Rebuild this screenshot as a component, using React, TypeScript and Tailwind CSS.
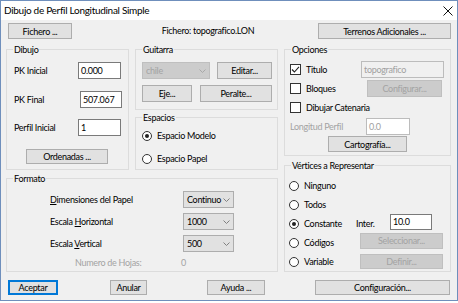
import React from 'react';

const Btn: React.FC<{
  className?: string;
  disabled?: boolean;
  primary?: boolean;
  children: React.ReactNode;
}> = ({ className = '', disabled, primary, children }) => (
  <div
    className={`flex shrink-0 items-center justify-center border leading-none ${
      disabled
        ? 'border-[#bfbfbf] bg-[#cccccc] text-[#a3a3a3]'
        : primary
          ? 'border-[#0078d7] bg-[#e1e1e1] text-black shadow-[inset_0_0_0_1px_#0078d7]'
          : 'border-[#adadad] bg-[#e1e1e1] text-black'
    } ${className}`}
  >
    {children}
  </div>
);

const Chevron: React.FC<{ color?: string }> = ({ color = '#606060' }) => (
  <svg width="7" height="4" viewBox="0 0 7 4" className="shrink-0">
    <polyline points="0.5,0.5 3.5,3.5 6.5,0.5" fill="none" stroke={color} strokeWidth="1" />
  </svg>
);

const Combo: React.FC<{ value: string; className?: string; disabled?: boolean }> = ({
  value,
  className = '',
  disabled,
}) => (
  <div
    className={`flex shrink-0 items-center justify-between border pl-[3px] pr-[3px] ${
      disabled ? 'border-[#bfbfbf] bg-[#cccccc] text-[#a3a3a3]' : 'border-[#adadad] bg-[#e1e1e1] text-black'
    } ${className}`}
  >
    <span>{value}</span>
    <Chevron color={disabled ? '#a8a8a8' : '#808080'} />
  </div>
);

const Field: React.FC<{ value: string; className?: string; disabled?: boolean }> = ({
  value,
  className = '',
  disabled,
}) => (
  <div
    className={`flex shrink-0 items-center border px-[2px] ${
      disabled ? 'border-[#bcbcbc] bg-[#f0f0f0] text-[#a0a0a0]' : 'border-[#7a7a7a] bg-white text-black'
    } ${className}`}
  >
    {value}
  </div>
);

const Check: React.FC<{ checked?: boolean; label: string; className?: string }> = ({
  checked,
  label,
  className = '',
}) => (
  <div className={`flex shrink-0 items-center ${className}`}>
    <div className="flex h-[11px] w-[11px] shrink-0 items-center justify-center border border-[#333333] bg-white">
      {checked && (
        <svg width="9" height="9" viewBox="0 0 9 9">
          <polyline points="1,4.5 3.4,7 8,1.8" fill="none" stroke="#222" strokeWidth="1.1" />
        </svg>
      )}
    </div>
    <span className="ml-[5px]">{label}</span>
  </div>
);

const Radio: React.FC<{ checked?: boolean; label: string; className?: string }> = ({
  checked,
  label,
  className = '',
}) => (
  <div className={`flex shrink-0 items-center ${className}`}>
    <div className="flex h-[10px] w-[10px] shrink-0 items-center justify-center rounded-full border border-[#333333] bg-white">
      {checked && <div className="h-[4px] w-[4px] rounded-full bg-[#222222]" />}
    </div>
    <span className="ml-[5px]">{label}</span>
  </div>
);

const Group: React.FC<{ title: string; className?: string; children: React.ReactNode }> = ({
  title,
  className = '',
  children,
}) => (
  <fieldset className={`shrink-0 border border-[#dcdcdc] ${className}`}>
    <legend className="ml-[6px] px-[1px] leading-[13px]">{title}</legend>
    {children}
  </fieldset>
);

export default function App() {
  return (
    <div className="h-[303px] w-[458px] bg-white font-['Lato',sans-serif] text-[9px] tracking-[-0.3px] text-black">
      <div className="flex h-[301px] w-[458px] flex-col border border-[#6f8fbc]">
        <div className="flex h-[19px] shrink-0 items-center justify-between bg-white pl-[3px] pr-[4px] text-[10px]">
          <span>Dibujo de Perfil Longitudinal Simple</span>
          <svg width="10" height="10" viewBox="0 0 10 10">
            <path d="M0.5 0.5 L9.5 9.5 M9.5 0.5 L0.5 9.5" stroke="#111" strokeWidth="1" />
          </svg>
        </div>

        <div className="flex-1 bg-[#f0f0f0] px-[5px]">
          <div className="mt-[3px] flex h-[16px] items-center">
            <Btn className="ml-[2px] h-[16px] w-[64px]">Fichero ...</Btn>
            <div className="flex-1 pl-[26px] text-center">Fichero: topografico.LON</div>
            <Btn className="mr-[1px] h-[16px] w-[133px]">Terrenos Adicionales ...</Btn>
          </div>

          <div className="mt-[4px] flex">
            <div className="flex w-[272px] flex-col">
              <div className="flex h-[127px] gap-[6px]">
                <Group title="Dibujo" className="h-[127px] w-[123px]">
                  <div className="mt-[6px] flex h-[17px] items-center pl-[7px]">
                    <span className="w-[64px]">PK Inicial</span>
                    <Field value="0.000" className="h-[17px] w-[43px]" />
                  </div>
                  <div className="mt-[12px] flex h-[17px] items-center pl-[7px]">
                    <span className="w-[66px]">PK Final</span>
                    <Field value="507.067" className="h-[17px] w-[42px]" />
                  </div>
                  <div className="mt-[11px] flex h-[17px] items-center pl-[7px]">
                    <span className="w-[64px]">Perfil Inicial</span>
                    <Field value="1" className="h-[17px] w-[43px]" />
                  </div>
                  <Btn className="ml-[19px] mt-[13px] h-[15px] w-[82px]">Ordenadas ...</Btn>
                </Group>

                <div className="flex w-[143px] flex-col">
                  <Group title="Guitarra" className="h-[67px] w-[143px]">
                    <div className="mt-[6px] flex gap-[7px] pl-[6px]">
                      <Combo value="chile" disabled className="h-[17px] w-[68px]" />
                      <Btn className="h-[17px] w-[55px]">Editar...</Btn>
                    </div>
                    <div className="mt-[6px] flex gap-[8px] pl-[6px]">
                      <Btn className="h-[17px] w-[50px]">Eje...</Btn>
                      <Btn className="h-[17px] w-[72px]">Peralte...</Btn>
                    </div>
                  </Group>
                  <Group title="Espacios" className="mt-[1px] h-[59px] w-[143px]">
                    <Radio checked label="Espacio Modelo" className="ml-[6px] mt-[5px] h-[13px]" />
                    <Radio label="Espacio Papel" className="ml-[6px] mt-[10px] h-[13px]" />
                  </Group>
                </div>
              </div>

              <Group title="Formato" className="mt-[2px] h-[100px] w-[272px]">
                <div className="mt-[6px] flex h-[17px] items-center pl-[43px]">
                  <span className="w-[133px]">
                    <u>D</u>imensiones del Papel
                  </span>
                  <Combo value="Continuo" className="h-[17px] w-[51px]" />
                </div>
                <div className="mt-[5px] flex h-[17px] items-center pl-[43px]">
                  <span className="w-[133px]">
                    Escala <u>H</u>orizontal
                  </span>
                  <Combo value="1000" className="h-[17px] w-[51px]" />
                </div>
                <div className="mt-[5px] flex h-[17px] items-center pl-[43px]">
                  <span className="w-[133px]">
                    Escala <u>V</u>ertical
                  </span>
                  <Combo value="500" className="h-[17px] w-[51px]" />
                </div>
                <div className="mt-[4px] flex h-[13px] items-center pl-[68px] text-[#a3a3a3]">
                  <span className="w-[106px]">Numero de Hojas:</span>
                  <span>0</span>
                </div>
              </Group>
            </div>

            <div className="ml-[6px] flex w-[167px] flex-col">
              <Group title="Opciones" className="h-[113px] w-[167px]">
                <div className="mt-[5px] flex h-[17px] items-center pl-[5px]">
                  <Check checked label="Titulo" className="w-[71px]" />
                  <Field value="topografico" disabled className="h-[17px] w-[83px]" />
                </div>
                <div className="mt-[2px] flex h-[17px] items-center pl-[5px]">
                  <Check label="Bloques" className="w-[77px]" />
                  <Btn disabled className="h-[17px] w-[75px]">Configurar...</Btn>
                </div>
                <div className="mt-[4px] flex h-[13px] items-center pl-[5px]">
                  <Check label="Dibujar Catenaria" />
                </div>
                <div className="mt-[4px] flex h-[17px] items-center pl-[5px]">
                  <span className="w-[76px] text-[#a3a3a3]">Longitud Perfil</span>
                  <Field value="0.0" disabled className="h-[17px] w-[44px] bg-white" />
                </div>
                <Btn className="ml-[43px] mt-[1px] h-[16px] w-[79px]">Cartografía...</Btn>
              </Group>

              <Group title="Vértices a Representar" className="mt-[3px] h-[113px] w-[167px]">
                <div className="mt-[4px] flex h-[19px] items-center pl-[4px]">
                  <Radio label="Ninguno" />
                </div>
                <div className="flex h-[19px] items-center pl-[4px]">
                  <Radio label="Todos" />
                </div>
                <div className="flex h-[19px] items-center pl-[4px]">
                  <Radio checked label="Constante" className="w-[67px]" />
                  <span className="w-[34px]">Inter.</span>
                  <Field value="10.0" className="-mt-[4px] h-[16px] w-[42px]" />
                </div>
                <div className="flex h-[19px] items-center pl-[4px]">
                  <Radio label="Códigos" className="w-[67px]" />
                  <Btn disabled className="-mt-[4px] ml-[4px] h-[16px] w-[83px]">Seleccionar...</Btn>
                </div>
                <div className="flex h-[19px] items-center pl-[4px]">
                  <Radio label="Variable" className="w-[67px]" />
                  <Btn disabled className="ml-[4px] h-[15px] w-[83px]">Definir...</Btn>
                </div>
              </Group>
            </div>
          </div>

          <div className="mt-[8px] flex h-[15px]">
            <Btn primary className="ml-[2px] h-[15px] w-[50px]">Aceptar</Btn>
            <Btn className="ml-[52px] h-[15px] w-[37px]">Anular</Btn>
            <Btn className="ml-[60px] h-[15px] w-[58px]">Ayuda ...</Btn>
            <Btn className="ml-[50px] h-[15px] w-[135px]">Configuración...</Btn>
          </div>
        </div>
      </div>
    </div>
  );
}
